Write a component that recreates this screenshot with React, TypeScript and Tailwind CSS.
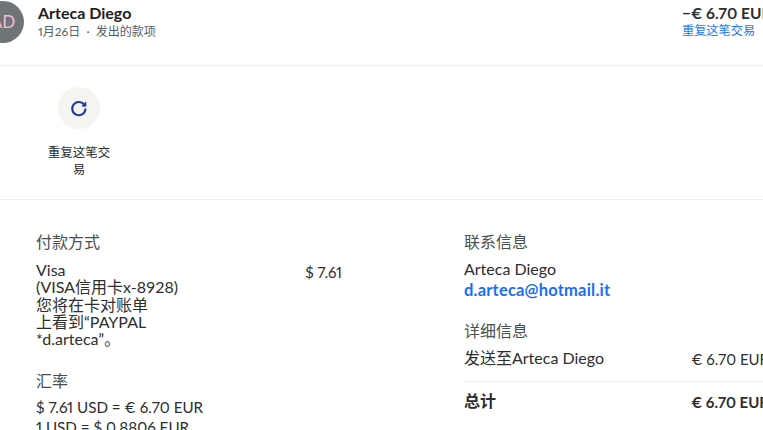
const font = { fontFamily: '"Lato", "Noto Sans CJK SC", sans-serif' };

function DetailRow({ label, value, bold }: { label: string; value: string; bold?: boolean }) {
  return (
    <div className={bold ? "flex justify-between font-bold" : "flex justify-between"}>
      <span className="text-[16px]">{label}</span>
      <span className="mt-[2px] whitespace-nowrap proportional-nums">{value}</span>
    </div>
  );
}

function RepeatIcon() {
  return (
    <svg width="20" height="20" viewBox="0 0 20 20" fill="none" className="text-[#1f3a9e]">
      <path d="M15.6 7.4A6.6 6.6 0 1 0 16.4 11.4" stroke="currentColor" strokeWidth="2.1" strokeLinecap="round" />
      <path d="M12.2 8.4 L17.4 8.6 L17.2 3.2 Z" fill="currentColor" />
    </svg>
  );
}

export default function App() {
  return (
    <div
      className="w-[763px] h-[430px] overflow-hidden bg-white text-[#2c2e2f] text-[15px]"
      style={font}
    >
      <div className="w-[800px]">
        <header className="h-[66px] border-b border-[#eeeeee] flex items-start justify-between">
          <div className="flex -ml-[18px] -mt-[3px]">
            <div className="w-[42px] h-[42px] rounded-full bg-[#6f7476] text-[#f5b8dc] text-[17px] flex items-center justify-center mt-[4px]">
              AD
            </div>
            <div className="ml-[14px] mt-[6px]">
              <div className="text-[16px] font-bold leading-[20px] text-[#1f2021]">Arteca Diego</div>
              <div className="text-[12px] leading-[17px] text-[#545d68] proportional-nums">1月26日 &nbsp;·&nbsp; 发出的款项</div>
            </div>
          </div>
          <div className="w-[118px] mt-[4px] -ml-[1px]">
            <div className="text-[15.5px] font-bold leading-[18px] whitespace-nowrap proportional-nums">−€ 6.70 EUR</div>
            <a className="text-[12.2px] leading-[18px] text-[#1a78f0] block">重复这笔交易</a>
          </div>
        </header>

        <section className="h-[134px] border-b border-[#eeeeee] pt-[21px] pl-[44px]">
          <div className="w-[70px] flex flex-col items-center">
            <div className="w-[42px] h-[42px] rounded-full bg-[#f5f4f0] flex items-center justify-center">
              <RepeatIcon />
            </div>
            <div className="mt-[15px] text-[12.5px] leading-[17px] text-center text-[#2c2e2f]">
              重复这笔交易
            </div>
          </div>
        </section>

        <section className="flex pl-[36px] pt-[31px]">
          <div className="w-[306px] shrink-0">
            <h3 className="text-[16px] leading-[22px] text-[#4a4f52] font-normal">付款方式</h3>
            <div className="flex justify-between mt-[8px]">
              <div className="w-[150px] leading-[17.3px] text-[16px]">
                Visa
                <br />
                (VISA信用卡x-8928)
                <br />
                您将在卡对账单
                <br />
                上看到“PAYPAL
                <br />
                *d.arteca”。
              </div>
              <div className="proportional-nums">$ 7.61</div>
            </div>
            <h3 className="mt-[23px] text-[16px] leading-[22px] text-[#4a4f52] font-normal">汇率</h3>
            <div className="mt-[5px] leading-[20px] proportional-nums text-[15.2px]">
              <div>$ 7.61 USD = € 6.70 EUR</div>
              <div>1 USD = $ 0.8806 EUR</div>
            </div>
          </div>
          <div className="ml-[122px] w-[305px] shrink-0">
            <h3 className="text-[16px] leading-[22px] text-[#4a4f52] font-normal">联系信息</h3>
            <div className="mt-[5px] leading-[21px] text-[16px]">Arteca Diego</div>
            <a className="mt-[1px] font-bold leading-[21px] text-[#1a6ff0] block text-[16.5px] tracking-[0.2px]">d.arteca@hotmail.it</a>
            <h3 className="mt-[19px] text-[16px] leading-[22px] text-[#4a4f52] font-normal">详细信息</h3>
            <div className="mt-[5px] pb-[11px] border-b border-[#eeeeee] leading-[21px]">
              <DetailRow label="发送至Arteca Diego" value="€ 6.70 EUR" />
            </div>
            <div className="mt-[8px] leading-[21px]">
              <DetailRow label="总计" value="€ 6.70 EUR" bold />
            </div>
          </div>
        </section>
      </div>
    </div>
  );
}
